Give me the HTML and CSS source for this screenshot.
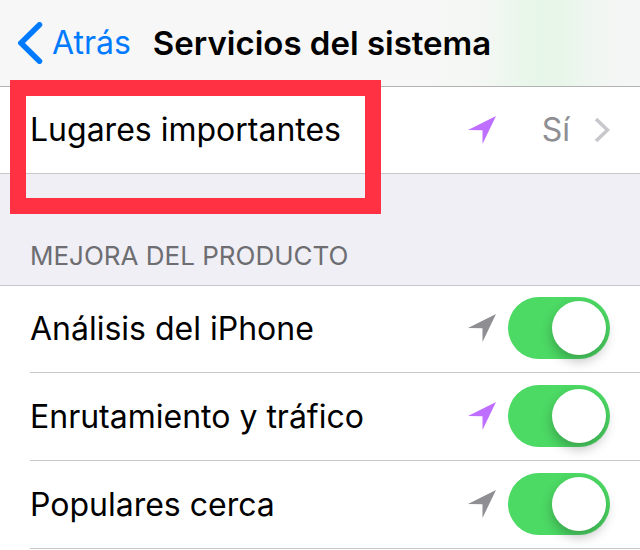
FILE: index.html
```html
<!DOCTYPE html>
<html lang="es">
<head>
    <meta charset="UTF-8">
    <meta name="viewport" content="width=device-width, initial-scale=1.0">
    <title>Servicios del sistema</title>
    <link rel="stylesheet" href="styles.css">
</head>
<body>
    <header class="navbar">
        <a class="back" href="#">
            <svg class="back-icon" width="25" height="42" viewBox="0 0 25 42" aria-hidden="true">
                <path d="M21.500 2.800L3 21l18.500 18.200" fill="none" stroke="currentColor" stroke-width="5.500" stroke-linecap="round"/>
            </svg>
            Atrás
        </a>
        <h1>Servicios del sistema</h1>
    </header>

    <main>
        <div class="list highlighted">
            <a class="row" href="#">
                <span class="name">Lugares importantes</span>
                <svg class="arrow purple" width="28" height="28" viewBox="0 0 28 28" aria-hidden="true">
                    <path d="M28 0L14.500 28V14.200L0 14z"/>
                </svg>
                <span class="value">Sí</span>
                <svg class="chevron" width="16" height="26" viewBox="0 0 16 26" aria-hidden="true">
                    <path d="M2 2l11.500 11L2 24" fill="none" stroke="currentColor" stroke-width="3.500"/>
                </svg>
            </a>
            <div class="highlight"></div>
        </div>

        <h2>MEJORA DEL PRODUCTO</h2>

        <div class="list options">
            <div class="row">
                <label class="name" for="analisis">Análisis del iPhone</label>
                <svg class="arrow" width="28" height="28" viewBox="0 0 28 28" aria-hidden="true">
                    <path d="M28 0L14.500 28V14.200L0 14z"/>
                </svg>
                <input class="switch" type="checkbox" id="analisis" checked>
            </div>
            <div class="row">
                <label class="name" for="trafico">Enrutamiento y tráfico</label>
                <svg class="arrow purple" width="28" height="28" viewBox="0 0 28 28" aria-hidden="true">
                    <path d="M28 0L14.500 28V14.200L0 14z"/>
                </svg>
                <input class="switch" type="checkbox" id="trafico" checked>
            </div>
            <div class="row">
                <label class="name" for="populares">Populares cerca</label>
                <svg class="arrow" width="28" height="28" viewBox="0 0 28 28" aria-hidden="true">
                    <path d="M28 0L14.500 28V14.200L0 14z"/>
                </svg>
                <input class="switch" type="checkbox" id="populares" checked>
            </div>
        </div>
    </main>
</body>
</html>
```

FILE: styles.css
```css
body {
    font-family: Inter, "Liberation Sans", sans-serif;
    font-size: 32px;
    line-height: 40px;
    background-color: #fff;
    color: #000;
    margin: 0;
}

a {
    color: inherit;
    text-decoration: none;
}

.navbar {
    display: flex;
    align-items: center;
    gap: 22px;
    height: 86px;
    padding: 0 18px;
    background: linear-gradient(to right, #f7f7f7 65%, #f3f7f3 76%, #e6f6e8 84%, #e8f6ea 88%, #f2f6f3 94%, #f4f6f5);
    border-bottom: 1px solid #b2b2b2;
}

.back {
    display: flex;
    align-items: center;
    gap: 9px;
    color: #007aff;
}

h1 {
    font-size: 33px;
    font-weight: 600;
    margin: 0;
    white-space: nowrap;
}

h2 {
    font-size: 26px;
    font-weight: 400;
    line-height: 32px;
    color: #6d6d72;
    background-color: #efeff5;
    margin: 0;
    padding: 66px 30px 13px;
    border: 1px solid #c8c7cc;
    border-width: 1px 0;
}

.list {
    background-color: #fff;
    padding-left: 30px;
}

.row {
    display: flex;
    align-items: center;
    height: 86px;
    padding-right: 30px;
}

.options .row {
    border-bottom: 1px solid #c8c7cc;
}

.options .row + .row {
    height: 87px;
}

.options .arrow,
.switch {
    margin-bottom: 2px;
}

.name {
    flex: 1;
}

.arrow {
    fill: #8e8e93;
    margin-right: 12px;
}

.purple {
    fill: #bf6fff;
}

.value {
    color: #8e8e93;
    margin-left: 34px;
    margin-right: 24px;
}

.chevron {
    color: #c7c7cc;
}

.highlighted {
    position: relative;
}

/* red frame drawn over the row and the bar above it */
.highlight {
    position: absolute;
    top: -7px;
    left: 10px;
    width: 371px;
    height: 134px;
    box-sizing: border-box;
    border: 16px solid #ff3142;
    pointer-events: none;
}

.switch {
    appearance: none;
    width: 102px;
    height: 62px;
    margin: 0 0 2px;
    padding: 4px;
    box-sizing: border-box;
    border-radius: 31px;
    background-color: #e5e5ea;
    display: flex;
    cursor: pointer;
}

.switch::before {
    content: "";
    width: 54px;
    height: 54px;
    border-radius: 50%;
    background-color: #fff;
    box-shadow: 0 6px 12px rgba(0, 0, 0, 0.25);
}

.switch:checked {
    background-color: #4cd964;
    justify-content: flex-end;
}
```
